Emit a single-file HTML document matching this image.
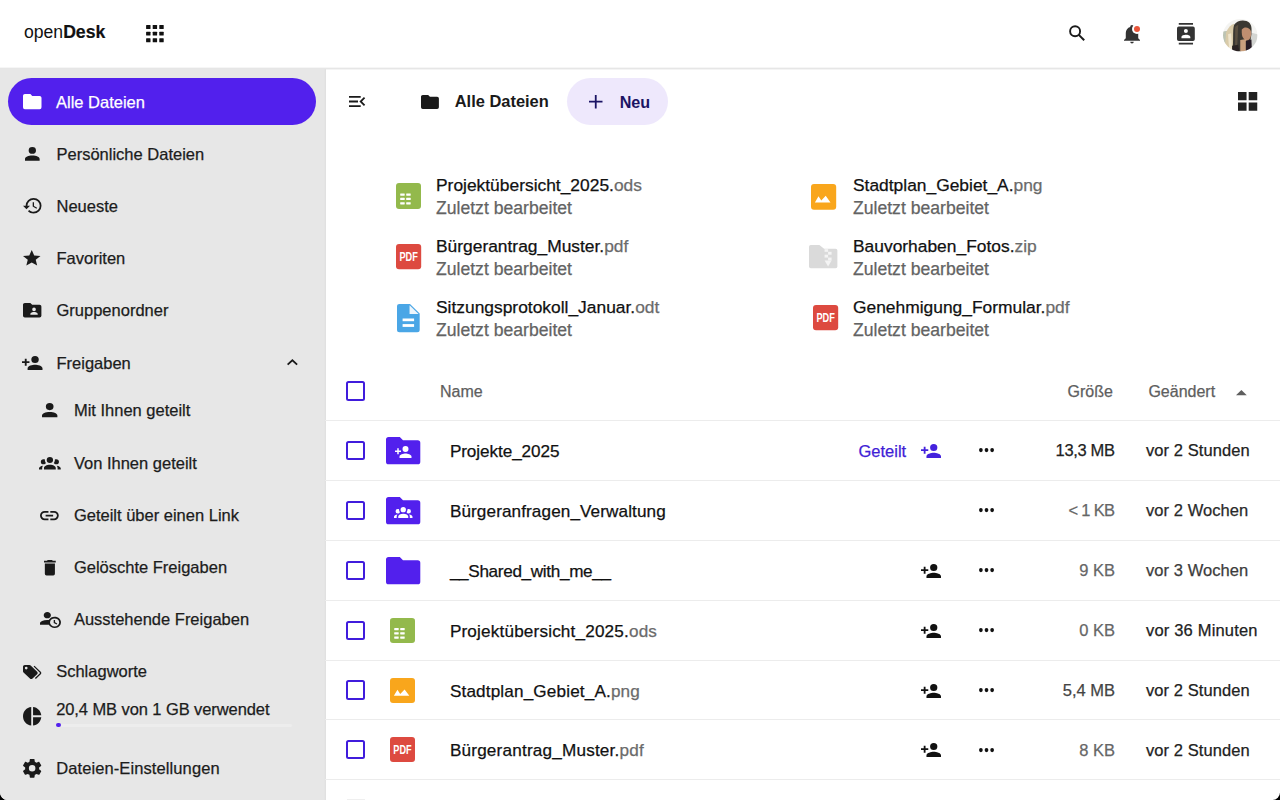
<!DOCTYPE html><html><head><meta charset="utf-8"><style>
html,body{margin:0;padding:0;}
body{width:1280px;height:800px;overflow:hidden;background:#000;font-family:"Liberation Sans",sans-serif;position:relative;}
#app{position:absolute;left:0;top:0;width:1280px;height:800px;background:#fff;border-radius:0 0 7.5px 7.5px;overflow:hidden;}
.t{position:absolute;white-space:nowrap;-webkit-text-stroke:0.25px currentColor;}
.i{position:absolute;display:block;overflow:visible;}
.box{position:absolute;}
.ext{color:#6b6b6b;}
</style></head><body><div id="app">
<div class="box" style="left:0;top:68px;width:1280px;height:1px;background:#e6e6e6;box-shadow:0 1px 0 #f4f4f4,0 -1px 0 #f6f6f6"></div>
<div class="t" style="left:24.00px;top:21.15px;font-size:17.6px;line-height:22px;color:#111;font-weight:400;-webkit-text-stroke:0;">open<b style="font-weight:700;-webkit-text-stroke:0.2px currentColor">Desk</b></div>
<svg class="i" style="left:146px;top:25px;width:18px;height:18px" viewBox="0 0 18 18"><rect x="0.10" y="0.10" width="4.4" height="3.95" rx="0.5" fill="#111"/><rect x="6.70" y="0.10" width="4.4" height="3.95" rx="0.5" fill="#111"/><rect x="13.30" y="0.10" width="4.4" height="3.95" rx="0.5" fill="#111"/><rect x="0.10" y="6.65" width="4.4" height="3.95" rx="0.5" fill="#111"/><rect x="6.70" y="6.65" width="4.4" height="3.95" rx="0.5" fill="#111"/><rect x="13.30" y="6.65" width="4.4" height="3.95" rx="0.5" fill="#111"/><rect x="0.10" y="13.20" width="4.4" height="3.95" rx="0.5" fill="#111"/><rect x="6.70" y="13.20" width="4.4" height="3.95" rx="0.5" fill="#111"/><rect x="13.30" y="13.20" width="4.4" height="3.95" rx="0.5" fill="#111"/></svg>
<svg class="i" style="left:1066px;top:22px;width:22px;height:22px" viewBox="0 0 22 22"><circle cx="9.1" cy="9.2" r="5" fill="none" stroke="#1a1a1a" stroke-width="1.9"/><path d="M12.8,12.9 L18.2,18.3" stroke="#1a1a1a" stroke-width="2" stroke-linecap="butt"/></svg>
<svg class="i" style="left:1123.70px;top:25.00px;width:16.00px;height:18.50px;" viewBox="3 2 18 21" preserveAspectRatio="none"><path fill="#333" d="M21,19V20H3V19L5,17V11C5,7.9 7.03,5.17 10,4.29C10,4.19 10,4.1 10,4A2,2 0 0,1 12,2A2,2 0 0,1 14,4C14,4.1 14,4.19 14,4.29C16.97,5.17 19,7.9 19,11V17L21,19M14,21A2,2 0 0,1 12,23A2,2 0 0,1 10,21"/></svg>
<div class="box" style="left:1131.5px;top:23.5px;width:10px;height:10px;border-radius:50%;background:#fff"></div>
<div class="box" style="left:1133.5px;top:25.5px;width:6px;height:6px;border-radius:50%;background:#e9553a"></div>
<svg class="i" style="left:1177.00px;top:22.90px;width:17.80px;height:21.50px;" viewBox="2 0 20 24" preserveAspectRatio="none"><path fill="#333" d="M20,0H4V2H20V0M4,24H20V22H4V24M20,4H4A2,2 0 0,0 2,6V18A2,2 0 0,0 4,20H20A2,2 0 0,0 22,18V6A2,2 0 0,0 20,4M12,6.75A2.25,2.25 0 0,1 14.25,9A2.25,2.25 0 0,1 12,11.25A2.25,2.25 0 0,1 9.75,9A2.250,2.25 0 0,1 12,6.75M17,17H7V15.5C7,13.83 10.33,13 12,13C13.67,13 17,13.83 17,15.5V17Z"/></svg>
<svg class="i" style="left:1223px;top:18.5px;width:34.5px;height:32.5px" viewBox="0 0 34 34" preserveAspectRatio="none"><defs><clipPath id="cav"><circle cx="17" cy="17" r="17"/></clipPath><filter id="avb" x="-10%" y="-10%" width="120%" height="120%"><feGaussianBlur stdDeviation="0.7"/></filter></defs><g clip-path="url(#cav)"><rect width="34" height="34" fill="#f4f4f2"/><g filter="url(#avb)"><path d="M0,13 L6,12 L6,30 L0,30Z" fill="#bcc4b4"/><path d="M27,14 L34,16 L34,34 L26,34Z" fill="#d3d5d2"/><path d="M3,14 C5,9 8,6 11,5 L12,31 L6,34 L2,28Z" fill="#d9cba9"/><path d="M5,16 L8,15 L9,32 L6,32Z" fill="#efe5cd"/><path d="M9,34 C11,24 9,12 11,6 C14,1 22,0 26,4 C29,8 28,12 28,16 L27,23 L19,23 C17,26 19,30 18,34Z" fill="#3b3730"/><path d="M12,8 L15,6 L14,30 L12,30Z" fill="#5a5040"/><path d="M18.5,11 C21,7.5 26,8.5 27.5,12.5 C28.5,17 27,21.5 24,22.5 C21,22.5 18.5,19.5 18.5,14.5Z" fill="#bf8e70"/><path d="M17,22 L23,21 L23.5,34 L17,34Z" fill="#c9a07e"/><path d="M22.5,23 L28,21.5 L28.5,34 L22.5,34Z" fill="#281d26"/><path d="M9,28 L15,27 L16,34 L9,34Z" fill="#2a2420"/></g></g></svg>
<div class="box" style="left:0;top:69px;width:326px;height:731px;background:#e7e7e7;box-shadow:inset -2px 0 2px -1px rgba(0,0,0,0.035)"></div>
<div class="box" style="left:8px;top:77.6px;width:308px;height:47.8px;border-radius:24px;background:#5220ed"></div>
<svg class="i" style="left:22.50px;top:93.75px;width:18.50px;height:15.25px;" viewBox="2 4 20 16" preserveAspectRatio="none"><path fill="#fff" d="M10,4H4C2.89,4 2,4.89 2,6V18A2,2 0 0,0 4,20H20A2,2 0 0,0 22,18V8C22,6.89 21.1,6 20,6H12L10,4Z"/></svg>
<div class="t" style="left:56.00px;top:91.53px;font-size:16.5px;line-height:21px;color:#fff;font-weight:400;">Alle Dateien</div>
<svg class="i" style="left:24.75px;top:146.90px;width:14.65px;height:13.70px;" viewBox="4 4 16 16" preserveAspectRatio="none"><path fill="#1a1a1a" d="M12,4A4,4 0 0,1 16,8A4,4 0 0,1 12,12A4,4 0 0,1 8,8A4,4 0 0,1 12,4M12,14C16.42,14 20,15.79 20,18V20H4V18C4,15.79 7.58,14 12,14Z"/></svg>
<div class="t" style="left:56.50px;top:143.53px;font-size:16.5px;line-height:21px;color:#1c1c1c;font-weight:400;">Persönliche Dateien</div>
<svg class="i" style="left:23.00px;top:198.00px;width:18.50px;height:15.50px;" viewBox="1 3 21 18" preserveAspectRatio="none"><path fill="#1a1a1a" d="M13.5,8H12V13L16.28,15.54L17,14.33L13.5,12.25V8M13,3A9,9 0 0,0 4,12H1L4.96,16.03L9,12H6A7,7 0 0,1 13,5A7,7 0 0,1 20,12A7,7 0 0,1 13,19C11.07,19 9.32,18.21 8.06,16.94L6.64,18.36C8.27,20 10.5,21 13,21A9,9 0 0,0 22,12A9,9 0 0,0 13,3"/></svg>
<div class="t" style="left:56.50px;top:195.58px;font-size:16.5px;line-height:21px;color:#1c1c1c;font-weight:400;">Neueste</div>
<svg class="i" style="left:23.00px;top:250.00px;width:17.50px;height:15.50px;" viewBox="2 2 20 19" preserveAspectRatio="none"><path fill="#1a1a1a" d="M12,17.27L18.18,21L16.54,13.97L22,9.24L14.81,8.62L12,2L9.19,8.62L2,9.24L7.45,13.97L5.82,21L12,17.27Z"/></svg>
<div class="t" style="left:56.50px;top:247.78px;font-size:16.5px;line-height:21px;color:#1c1c1c;font-weight:400;">Favoriten</div>
<svg class="i" style="left:23.10px;top:303.00px;width:18.40px;height:14.60px;" viewBox="2 4 20 16" preserveAspectRatio="none"><path fill="#1a1a1a" d="M10,4H4C2.89,4 2,4.89 2,6V18A2,2 0 0,0 4,20H20A2,2 0 0,0 22,18V8C22,6.89 21.1,6 20,6H12L10,4M14,9A2,2 0 0,1 16,11A2,2 0 0,1 14,13A2,2 0 0,1 12,11A2,2 0 0,1 14,9M18,17H10V16C10,14.67 12.67,14 14,14C15.33,14 18,14.67 18,16V17Z"/></svg>
<div class="t" style="left:56.50px;top:300.03px;font-size:16.5px;line-height:21px;color:#1c1c1c;font-weight:400;">Gruppenordner</div>
<svg class="i" style="left:21.90px;top:355.60px;width:20.50px;height:14.00px;" viewBox="1 4 22 16" preserveAspectRatio="none"><path fill="#1a1a1a" d="M15,14C12.33,14 7,15.33 7,18V20H23V18C23,15.33 17.67,14 15,14M6,10V7H4V10H1V12H4V15H6V12H9V10M15,12A4,4 0 0,0 19,8A4,4 0 0,0 15,4A4,4 0 0,0 11,8A4,4 0 0,0 15,12Z"/></svg>
<div class="t" style="left:56.50px;top:352.53px;font-size:16.5px;line-height:21px;color:#1c1c1c;font-weight:400;">Freigaben</div>
<svg class="i" style="left:41.50px;top:403.40px;width:15.40px;height:14.35px;" viewBox="4 4 16 16" preserveAspectRatio="none"><path fill="#1a1a1a" d="M12,4A4,4 0 0,1 16,8A4,4 0 0,1 12,12A4,4 0 0,1 8,8A4,4 0 0,1 12,4M12,14C16.42,14 20,15.79 20,18V20H4V18C4,15.79 7.58,14 12,14Z"/></svg>
<div class="t" style="left:73.90px;top:400.18px;font-size:16.5px;line-height:21px;color:#1c1c1c;font-weight:400;">Mit Ihnen geteilt</div>
<svg class="i" style="left:38.75px;top:457.00px;width:21.75px;height:12.50px;" viewBox="0 5.5 24 14.5" preserveAspectRatio="none"><path fill="#1a1a1a" d="M12,5.5A3.5,3.5 0 0,1 15.5,9A3.5,3.5 0 0,1 12,12.5A3.5,3.5 0 0,1 8.5,9A3.5,3.5 0 0,1 12,5.5M5,8C5.56,8 6.08,8.15 6.53,8.42C6.38,9.85 6.8,11.27 7.66,12.38C7.16,13.34 6.16,14 5,14A3,3 0 0,1 2,11A3,3 0 0,1 5,8M19,8A3,3 0 0,1 22,11A3,3 0 0,1 19,14C17.84,14 16.84,13.34 16.34,12.38C17.2,11.27 17.62,9.85 17.47,8.42C17.92,8.15 18.44,8 19,8M5.5,18.25C5.5,16.18 8.41,14.5 12,14.5C15.59,14.5 18.5,16.18 18.5,18.25V20H5.5V18.25M0,20V18.5C0,17.11 1.89,15.94 4.45,15.6C3.86,16.28 3.5,17.22 3.5,18.25V20H0M24,20H20.5V18.25C20.5,17.22 20.14,16.28 19.55,15.6C22.11,15.94 24,17.11 24,18.5V20Z"/></svg>
<div class="t" style="left:73.90px;top:452.53px;font-size:16.5px;line-height:21px;color:#1c1c1c;font-weight:400;">Von Ihnen geteilt</div>
<svg class="i" style="left:40.00px;top:510.75px;width:18.75px;height:9.25px;" viewBox="2 7 20 10" preserveAspectRatio="none"><path fill="#1a1a1a" d="M3.9,12C3.9,10.29 5.29,8.9 7,8.9H11V7H7A5,5 0 0,0 2,12A5,5 0 0,0 7,17H11V15.1H7C5.29,15.1 3.9,13.71 3.9,12M8,13H16V11H8V13M17,7H13V8.9H17C18.71,8.9 20.1,10.29 20.1,12C20.1,13.71 18.71,15.1 17,15.1H13V17H17A5,5 0 0,0 22,12A5,5 0 0,0 17,7Z"/></svg>
<div class="t" style="left:73.90px;top:505.03px;font-size:16.5px;line-height:21px;color:#1c1c1c;font-weight:400;">Geteilt über einen Link</div>
<svg class="i" style="left:43.75px;top:559.50px;width:11.75px;height:15.50px;" viewBox="5 3 14 18" preserveAspectRatio="none"><path fill="#1a1a1a" d="M19,4H15.5L14.5,3H9.5L8.5,4H5V6H19M6,19A2,2 0 0,0 8,21H16A2,2 0 0,0 18,19V7H6V19Z"/></svg>
<div class="t" style="left:73.90px;top:557.03px;font-size:16.5px;line-height:21px;color:#1c1c1c;font-weight:400;">Gelöschte Freigaben</div>
<svg class="i" style="left:39.50px;top:612.00px;width:21.00px;height:16.00px;" viewBox="1 4 23 20" preserveAspectRatio="none"><path fill="#1a1a1a" d="M10.63,14.1C12.23,10.58 16.38,9.03 19.9,10.63C23.42,12.23 24.97,16.38 23.37,19.9C22.24,22.4 19.75,24 17,24C14.3,24 11.83,22.44 10.67,20H1V18C1.06,16.86 1.84,15.93 3.34,15.18C4.84,14.43 6.72,14.04 9,14C9.57,14 10.11,14.05 10.63,14.1V14.1M9,4C10.12,4.03 11.06,4.42 11.81,5.17C12.56,5.92 12.93,6.86 12.93,8C12.93,9.14 12.56,10.08 11.81,10.83C11.06,11.58 10.12,11.95 9,11.95C7.88,11.95 6.94,11.58 6.19,10.83C5.44,10.08 5.07,9.14 5.07,8C5.07,6.86 5.44,5.92 6.19,5.17C6.94,4.42 7.88,4.03 9,4M17,22A5,5 0 0,0 22,17A5,5 0 0,0 17,12A5,5 0 0,0 12,17A5,5 0 0,0 17,22M16,14H17.5V16.82L19.94,18.23L19.19,19.53L16,17.69V14Z"/></svg>
<div class="t" style="left:73.90px;top:609.28px;font-size:16.5px;line-height:21px;color:#1c1c1c;font-weight:400;">Ausstehende Freigaben</div>
<svg class="i" style="left:22.90px;top:664.50px;width:18.30px;height:14.10px;" viewBox="2 4 20 16" preserveAspectRatio="none"><path fill="#1a1a1a" d="M5.5,9A1.5,1.5 0 0,0 7,7.5A1.5,1.5 0 0,0 5.5,6A1.5,1.5 0 0,0 4,7.5A1.5,1.5 0 0,0 5.5,9M17.41,11.58C17.77,11.94 18,12.44 18,13C18,13.55 17.78,14.05 17.41,14.41L12.41,19.41C12.05,19.77 11.55,20 11,20C10.45,20 9.95,19.78 9.58,19.41L2.59,12.42C2.22,12.05 2,11.55 2,11V6C2,4.89 2.89,4 4,4H9C9.55,4 10.05,4.22 10.41,4.58L17.41,11.58M13.54,5.71L14.54,4.71L21.41,11.58C21.78,11.94 22,12.45 22,13C22,13.55 21.78,14.05 21.42,14.41L16.04,19.79L15.04,18.79L20.75,13L13.54,5.71Z"/></svg>
<div class="t" style="left:56.20px;top:661.43px;font-size:16.5px;line-height:21px;color:#1c1c1c;font-weight:400;">Schlagworte</div>
<svg class="i" style="left:22.90px;top:707.00px;width:18.30px;height:18.50px;" viewBox="2 2 20 20" preserveAspectRatio="none"><path fill="#1a1a1a" d="M11,2V22C5.9,21.5 2,17.2 2,12C2,6.8 5.9,2.5 11,2M13,2V11H22C21.5,6.2 17.8,2.5 13,2M13,13V22C17.7,21.5 21.5,17.8 22,13H13Z"/></svg>
<div class="t" style="left:56.20px;top:699.38px;font-size:16.5px;line-height:21px;color:#1c1c1c;font-weight:400;letter-spacing:-0.090px;">20,4 MB von 1 GB verwendet</div>
<svg class="i" style="left:22.90px;top:759.00px;width:18.30px;height:18.70px;" viewBox="2.2 2 19.6 20" preserveAspectRatio="none"><path fill="#1a1a1a" d="M12,15.5A3.5,3.5 0 0,1 8.5,12A3.5,3.5 0 0,1 12,8.5A3.5,3.5 0 0,1 15.5,12A3.5,3.5 0 0,1 12,15.5M19.43,12.97C19.47,12.65 19.5,12.33 19.5,12C19.5,11.67 19.47,11.34 19.43,11L21.54,9.37C21.73,9.22 21.78,8.95 21.66,8.73L19.66,5.27C19.54,5.05 19.27,4.96 19.05,5.05L16.56,6.05C16.04,5.66 15.5,5.32 14.87,5.07L14.5,2.42C14.46,2.18 14.25,2 14,2H10C9.75,2 9.54,2.18 9.5,2.420L9.13,5.07C8.5,5.32 7.96,5.66 7.440,6.05L4.95,5.05C4.73,4.96 4.46,5.05 4.34,5.27L2.34,8.73C2.21,8.95 2.27,9.22 2.46,9.37L4.57,11C4.53,11.34 4.5,11.67 4.5,12C4.5,12.33 4.53,12.65 4.57,12.97L2.46,14.63C2.27,14.78 2.21,15.05 2.34,15.27L4.34,18.73C4.46,18.95 4.73,19.03 4.95,18.95L7.44,17.94C7.96,18.34 8.5,18.68 9.13,18.93L9.5,21.58C9.54,21.82 9.75,22 10,22H14C14.25,22 14.46,21.82 14.5,21.58L14.87,18.93C15.5,18.67 16.04,18.34 16.56,17.94L19.05,18.95C19.27,19.03 19.54,18.95 19.66,18.73L21.66,15.27C21.78,15.05 21.73,14.78 21.54,14.63L19.43,12.97Z"/></svg>
<div class="t" style="left:56.20px;top:757.98px;font-size:16.5px;line-height:21px;color:#1c1c1c;font-weight:400;letter-spacing:0.100px;">Dateien-Einstellungen</div>
<svg class="i" style="left:286.50px;top:359.00px;width:10.75px;height:6.25px;" viewBox="6 8 12 7.41" preserveAspectRatio="none"><path fill="#1a1a1a" d="M7.41,15.41L12,10.83L16.59,15.41L18,14L12,8L6,14L7.41,15.41Z"/></svg>
<div class="box" style="left:56px;top:723.5px;width:236px;height:3px;border-radius:2px;background:#ededed"></div>
<div class="box" style="left:56px;top:722.8px;width:4.6px;height:4.6px;border-radius:50%;background:#5220ed"></div>
<svg class="i" style="left:348.90px;top:96.00px;width:16.20px;height:11.00px;" viewBox="3 6 18 12" preserveAspectRatio="none"><path fill="#1a1a1a" d="M21,15.61L19.59,17L14.58,12L19.59,7L21,8.39L17.44,12L21,15.61M3,6H16V8H3V6M3,13V11H13V13H3M3,18V16H16V18H3Z"/></svg>
<svg class="i" style="left:421.00px;top:94.50px;width:17.90px;height:14.10px;" viewBox="2 4 20 16" preserveAspectRatio="none"><path fill="#1a1a1a" d="M10,4H4C2.89,4 2,4.89 2,6V18A2,2 0 0,0 4,20H20A2,2 0 0,0 22,18V8C22,6.89 21.1,6 20,6H12L10,4Z"/></svg>
<div class="t" style="left:454.70px;top:91.30px;font-size:16.44px;line-height:21px;color:#1a1a1a;font-weight:700;-webkit-text-stroke:0;">Alle Dateien</div>
<div class="box" style="left:566.6px;top:77.9px;width:101.8px;height:46.9px;border-radius:24px;background:#eee8fc"></div>
<svg class="i" style="left:588.75px;top:95px;width:13.5px;height:13.4px" viewBox="0 0 13.5 13.4"><path d="M6.75,0V13.4M0,6.7H13.5" stroke="#1b1464" stroke-width="1.8"/></svg>
<div class="t" style="left:619.70px;top:91.91px;font-size:16.14px;line-height:20px;color:#1b1464;font-weight:700;-webkit-text-stroke:0;">Neu</div>
<svg class="i" style="left:1238.25px;top:92.00px;width:19.25px;height:18.75px;" viewBox="3 3 18 18" preserveAspectRatio="none"><path fill="#222" d="M3,11H11V3H3M3,21H11V13H3M13,21H21V13H13M13,3V11H21V3"/></svg>
<svg class="i" style="left:396px;top:183px;width:25px;height:26px" viewBox="0 0 25 26" preserveAspectRatio="none"><rect width="25" height="26" rx="3" fill="#93b94c"/><rect x="4.2" y="10.4" width="4.5" height="2.3" rx="0.4" fill="#fff"/><rect x="10.2" y="10.4" width="4.5" height="2.3" rx="0.4" fill="#fff"/><rect x="4.2" y="14.8" width="4.5" height="2.3" rx="0.4" fill="#fff"/><rect x="10.2" y="14.8" width="4.5" height="2.3" rx="0.4" fill="#fff"/><rect x="4.2" y="19.2" width="4.5" height="2.3" rx="0.4" fill="#fff"/><rect x="10.2" y="19.2" width="4.5" height="2.3" rx="0.4" fill="#fff"/></svg>
<div class="t" style="left:436.00px;top:173.87px;font-size:17.4px;line-height:22px;color:#111;font-weight:400;">Projektübersicht_2025.<span class="ext">ods</span></div>
<div class="t" style="left:436.00px;top:196.60px;font-size:17.6px;line-height:22px;color:#636363;font-weight:400;">Zuletzt bearbeitet</div>
<svg class="i" style="left:395.75px;top:244.4px;width:25.2px;height:25.2px" viewBox="0 0 25.2 25.2" preserveAspectRatio="none"><rect width="25.2" height="25.2" rx="3" fill="#dd4a40"/><text x="12.6" y="17.4" text-anchor="middle" font-family="Liberation Sans" font-weight="700" font-size="12.4" fill="#fff" textLength="18.4" lengthAdjust="spacingAndGlyphs">PDF</text></svg>
<div class="t" style="left:436.00px;top:234.77px;font-size:17.4px;line-height:22px;color:#111;font-weight:400;">Bürgerantrag_Muster.<span class="ext">pdf</span></div>
<div class="t" style="left:436.00px;top:257.50px;font-size:17.6px;line-height:22px;color:#636363;font-weight:400;">Zuletzt bearbeitet</div>
<svg class="i" style="left:397.2px;top:304.4px;width:22.7px;height:28.3px" viewBox="0 0 22.7 28.3" preserveAspectRatio="none"><path d="M2.5,0 H13 L22.7,9.6 V25.8 A2.5,2.5 0 0 1 20.2,28.3 H2.5 A2.5,2.5 0 0 1 0,25.8 V2.5 A2.5,2.5 0 0 1 2.5,0Z" fill="#4aa6e6"/><path d="M12.6,1.2 L21.6,10 H12.6Z" fill="#eef6fc"/><rect x="5.6" y="14.5" width="11.5" height="2.7" fill="#fff"/><rect x="5.6" y="20.1" width="11.5" height="2.8" fill="#fff"/></svg>
<div class="t" style="left:436.00px;top:296.27px;font-size:17.4px;line-height:22px;color:#111;font-weight:400;">Sitzungsprotokoll_Januar.<span class="ext">odt</span></div>
<div class="t" style="left:436.00px;top:319.00px;font-size:17.6px;line-height:22px;color:#636363;font-weight:400;">Zuletzt bearbeitet</div>
<svg class="i" style="left:810.5px;top:184.2px;width:25.2px;height:25.8px" viewBox="0 0 25.2 25.8" preserveAspectRatio="none"><rect width="25.2" height="25.8" rx="3" fill="#f9a61c"/><path d="M3.9,18.4 L7.5,12.2 L10.3,16.6 L14.7,11.8 L19.5,18.4Z" fill="#fff"/></svg>
<div class="t" style="left:853.00px;top:173.87px;font-size:17.4px;line-height:22px;color:#111;font-weight:400;">Stadtplan_Gebiet_A.<span class="ext">png</span></div>
<div class="t" style="left:853.00px;top:196.60px;font-size:17.6px;line-height:22px;color:#636363;font-weight:400;">Zuletzt bearbeitet</div>
<svg class="i" style="left:809.2px;top:245.1px;width:28.4px;height:23.2px" viewBox="0 0 28.4 23.2" preserveAspectRatio="none"><path d="M1.8,0 H10.4 L15.1,3.8 H26.6 A1.8,1.8 0 0 1 28.4,5.6 V21.4 A1.8,1.8 0 0 1 26.6,23.2 H1.8 A1.8,1.8 0 0 1 0,21.4 V1.8 A1.8,1.8 0 0 1 1.8,0Z" fill="#dadada"/><rect x="15.6" y="4.2" width="3.5" height="2.6" fill="#f4f4f4"/><rect x="19.1" y="6.8" width="3.5" height="2.9" fill="#f4f4f4"/><rect x="15.6" y="9.7" width="3.5" height="2.9" fill="#f4f4f4"/><rect x="19.1" y="12.6" width="3.5" height="2.9" fill="#f4f4f4"/><path d="M15.6,15.5 H22.6 L19.1,21.5Z" fill="#f4f4f4"/></svg>
<div class="t" style="left:853.00px;top:234.77px;font-size:17.4px;line-height:22px;color:#111;font-weight:400;">Bauvorhaben_Fotos.<span class="ext">zip</span></div>
<div class="t" style="left:853.00px;top:257.50px;font-size:17.6px;line-height:22px;color:#636363;font-weight:400;">Zuletzt bearbeitet</div>
<svg class="i" style="left:813.3px;top:305.4px;width:25.2px;height:25.2px" viewBox="0 0 25.2 25.2" preserveAspectRatio="none"><rect width="25.2" height="25.2" rx="3" fill="#dd4a40"/><text x="12.6" y="17.4" text-anchor="middle" font-family="Liberation Sans" font-weight="700" font-size="12.4" fill="#fff" textLength="18.4" lengthAdjust="spacingAndGlyphs">PDF</text></svg>
<div class="t" style="left:853.00px;top:296.27px;font-size:17.4px;line-height:22px;color:#111;font-weight:400;">Genehmigung_Formular.<span class="ext">pdf</span></div>
<div class="t" style="left:853.00px;top:319.00px;font-size:17.6px;line-height:22px;color:#636363;font-weight:400;">Zuletzt bearbeitet</div>
<div class="box" style="left:345.9px;top:381.2px;width:15.6px;height:15.6px;border:2px solid #401cdc;border-radius:2.5px"></div>
<div class="box" style="left:347px;top:798.5px;width:18px;height:1.5px;background:#efefef"></div>
<div class="t" style="left:440.00px;top:381.56px;font-size:16px;line-height:20px;color:#5e5e5e;font-weight:400;">Name</div>
<div class="t" style="right:167.20px;top:381.56px;font-size:16px;line-height:20px;color:#5e5e5e;font-weight:400;">Größe</div>
<div class="t" style="left:1148.40px;top:381.56px;font-size:16px;line-height:20px;color:#5e5e5e;font-weight:400;">Geändert</div>
<svg class="i" style="left:1236.00px;top:389.70px;width:10.80px;height:5.30px;" viewBox="7 10 10 5" preserveAspectRatio="none"><path fill="#5e5e5e" d="M7,15L12,10L17,15H7Z"/></svg>
<div class="box" style="left:325px;top:420.00px;width:955px;height:1px;background:#ececec"></div>
<div class="box" style="left:325px;top:480.00px;width:955px;height:1px;background:#ececec"></div>
<div class="box" style="left:325px;top:540.00px;width:955px;height:1px;background:#ececec"></div>
<div class="box" style="left:325px;top:600.00px;width:955px;height:1px;background:#ececec"></div>
<div class="box" style="left:325px;top:659.70px;width:955px;height:1px;background:#ececec"></div>
<div class="box" style="left:325px;top:719.40px;width:955px;height:1px;background:#ececec"></div>
<div class="box" style="left:325px;top:778.80px;width:955px;height:1px;background:#ececec"></div>
<div class="box" style="left:345.9px;top:440.7px;width:15.6px;height:15.6px;border:2px solid #401cdc;border-radius:2.5px"></div>
<svg class="i" style="left:385.7px;top:436.9px;width:34.3px;height:27.3px" viewBox="0 0 34.3 27.3" preserveAspectRatio="none"><path d="M2.6,0 H13.8 L17,3.2 H31.7 A2.6,2.6 0 0 1 34.3,5.8 V24.7 A2.6,2.6 0 0 1 31.7,27.3 H2.6 A2.6,2.6 0 0 1 0,24.7 V2.6 A2.6,2.6 0 0 1 2.6,0Z" fill="#5220ed"/></svg>
<svg class="i" style="left:394.80px;top:445.70px;width:16.50px;height:12.00px;" viewBox="1 4 22 16" preserveAspectRatio="none"><path fill="#fff" d="M15,14C12.33,14 7,15.33 7,18V20H23V18C23,15.33 17.67,14 15,14M6,10V7H4V10H1V12H4V15H6V12H9V10M15,12A4,4 0 0,0 19,8A4,4 0 0,0 15,4A4,4 0 0,0 11,8A4,4 0 0,0 15,12Z"/></svg>
<div class="t" style="left:449.90px;top:441.21px;font-size:17.15px;line-height:21px;color:#111;font-weight:400;letter-spacing:-0.080px;">Projekte_2025</div>
<div class="t" style="left:858.50px;top:441.28px;font-size:16.5px;line-height:21px;color:#3f1ed6;font-weight:400;">Geteilt</div>
<svg class="i" style="left:921.00px;top:444.00px;width:20.00px;height:14.10px;" viewBox="1 4 22 16" preserveAspectRatio="none"><path fill="#4422dd" d="M15,14C12.33,14 7,15.33 7,18V20H23V18C23,15.33 17.67,14 15,14M6,10V7H4V10H1V12H4V15H6V12H9V10M15,12A4,4 0 0,0 19,8A4,4 0 0,0 15,4A4,4 0 0,0 11,8A4,4 0 0,0 15,12Z"/></svg>
<svg class="i" style="left:979.00px;top:448.40px;width:15.00px;height:4.20px;" viewBox="4 10 16 4" preserveAspectRatio="none"><path fill="#111" d="M16,12A2,2 0 0,1 18,10A2,2 0 0,1 20,12A2,2 0 0,1 18,14A2,2 0 0,1 16,12M10,12A2,2 0 0,1 12,10A2,2 0 0,1 14,12A2,2 0 0,1 12,14A2,2 0 0,1 10,12M4,12A2,2 0 0,1 6,10A2,2 0 0,1 8,12A2,2 0 0,1 6,14A2,2 0 0,1 4,12Z"/></svg>
<div class="t" style="right:165.33px;top:440.48px;font-size:16.5px;line-height:21px;color:#222;font-weight:400;letter-spacing:-0.330px;">13,3 MB</div>
<div class="t" style="left:1146.00px;top:440.48px;font-size:16.5px;line-height:21px;color:#222;font-weight:400;letter-spacing:0.080px;">vor 2 Stunden</div>
<div class="box" style="left:345.9px;top:500.7px;width:15.6px;height:15.6px;border:2px solid #401cdc;border-radius:2.5px"></div>
<svg class="i" style="left:385.7px;top:496.9px;width:34.3px;height:27.3px" viewBox="0 0 34.3 27.3" preserveAspectRatio="none"><path d="M2.6,0 H13.8 L17,3.2 H31.7 A2.6,2.6 0 0 1 34.3,5.8 V24.7 A2.6,2.6 0 0 1 31.7,27.3 H2.6 A2.6,2.6 0 0 1 0,24.7 V2.6 A2.6,2.6 0 0 1 2.6,0Z" fill="#5220ed"/></svg>
<svg class="i" style="left:393.75px;top:506.60px;width:18.50px;height:10.90px;" viewBox="0 5.5 24 14.5" preserveAspectRatio="none"><path fill="#fff" d="M12,5.5A3.5,3.5 0 0,1 15.5,9A3.5,3.5 0 0,1 12,12.5A3.5,3.5 0 0,1 8.5,9A3.5,3.5 0 0,1 12,5.5M5,8C5.56,8 6.08,8.15 6.53,8.42C6.38,9.85 6.8,11.27 7.66,12.38C7.16,13.34 6.16,14 5,14A3,3 0 0,1 2,11A3,3 0 0,1 5,8M19,8A3,3 0 0,1 22,11A3,3 0 0,1 19,14C17.84,14 16.84,13.34 16.34,12.38C17.2,11.27 17.62,9.85 17.47,8.42C17.92,8.15 18.44,8 19,8M5.5,18.25C5.5,16.18 8.41,14.5 12,14.5C15.59,14.5 18.5,16.18 18.5,18.25V20H5.5V18.25M0,20V18.5C0,17.11 1.89,15.94 4.45,15.6C3.86,16.28 3.5,17.22 3.5,18.25V20H0M24,20H20.5V18.25C20.5,17.22 20.14,16.28 19.55,15.6C22.11,15.94 24,17.11 24,18.5V20Z"/></svg>
<div class="t" style="left:449.90px;top:501.21px;font-size:17.15px;line-height:21px;color:#111;font-weight:400;letter-spacing:0.100px;">Bürgeranfragen_Verwaltung</div>
<svg class="i" style="left:979.00px;top:508.40px;width:15.00px;height:4.20px;" viewBox="4 10 16 4" preserveAspectRatio="none"><path fill="#111" d="M16,12A2,2 0 0,1 18,10A2,2 0 0,1 20,12A2,2 0 0,1 18,14A2,2 0 0,1 16,12M10,12A2,2 0 0,1 12,10A2,2 0 0,1 14,12A2,2 0 0,1 12,14A2,2 0 0,1 10,12M4,12A2,2 0 0,1 6,10A2,2 0 0,1 8,12A2,2 0 0,1 6,14A2,2 0 0,1 4,12Z"/></svg>
<div class="t" style="right:165.70px;top:500.48px;font-size:16.5px;line-height:21px;color:#666;font-weight:400;letter-spacing:-0.700px;">&lt; 1 KB</div>
<div class="t" style="left:1146.00px;top:500.48px;font-size:16.5px;line-height:21px;color:#2a2a2a;font-weight:400;letter-spacing:0.060px;">vor 2 Wochen</div>
<div class="box" style="left:345.9px;top:560.7px;width:15.6px;height:15.6px;border:2px solid #401cdc;border-radius:2.5px"></div>
<svg class="i" style="left:385.7px;top:556.9px;width:34.3px;height:27.3px" viewBox="0 0 34.3 27.3" preserveAspectRatio="none"><path d="M2.6,0 H13.8 L17,3.2 H31.7 A2.6,2.6 0 0 1 34.3,5.8 V24.7 A2.6,2.6 0 0 1 31.7,27.3 H2.6 A2.6,2.6 0 0 1 0,24.7 V2.6 A2.6,2.6 0 0 1 2.6,0Z" fill="#5220ed"/></svg>
<div class="t" style="left:449.90px;top:561.21px;font-size:17.15px;line-height:21px;color:#111;font-weight:400;letter-spacing:-0.330px;">__Shared_with_me__</div>
<svg class="i" style="left:921.00px;top:564.00px;width:20.00px;height:14.10px;" viewBox="1 4 22 16" preserveAspectRatio="none"><path fill="#111" d="M15,14C12.33,14 7,15.33 7,18V20H23V18C23,15.33 17.67,14 15,14M6,10V7H4V10H1V12H4V15H6V12H9V10M15,12A4,4 0 0,0 19,8A4,4 0 0,0 15,4A4,4 0 0,0 11,8A4,4 0 0,0 15,12Z"/></svg>
<svg class="i" style="left:979.00px;top:568.40px;width:15.00px;height:4.20px;" viewBox="4 10 16 4" preserveAspectRatio="none"><path fill="#111" d="M16,12A2,2 0 0,1 18,10A2,2 0 0,1 20,12A2,2 0 0,1 18,14A2,2 0 0,1 16,12M10,12A2,2 0 0,1 12,10A2,2 0 0,1 14,12A2,2 0 0,1 12,14A2,2 0 0,1 10,12M4,12A2,2 0 0,1 6,10A2,2 0 0,1 8,12A2,2 0 0,1 6,14A2,2 0 0,1 4,12Z"/></svg>
<div class="t" style="right:165.00px;top:560.48px;font-size:16.5px;line-height:21px;color:#666;font-weight:400;">9 KB</div>
<div class="t" style="left:1146.00px;top:560.48px;font-size:16.5px;line-height:21px;color:#3c3c3c;font-weight:400;letter-spacing:0.060px;">vor 3 Wochen</div>
<div class="box" style="left:345.9px;top:620.5500000000001px;width:15.6px;height:15.6px;border:2px solid #401cdc;border-radius:2.5px"></div>
<svg class="i" style="left:389.8px;top:617.85px;width:25px;height:25px" viewBox="0 0 25 26" preserveAspectRatio="none"><rect width="25" height="26" rx="3" fill="#93b94c"/><rect x="4.2" y="10.4" width="4.5" height="2.3" rx="0.4" fill="#fff"/><rect x="10.2" y="10.4" width="4.5" height="2.3" rx="0.4" fill="#fff"/><rect x="4.2" y="14.8" width="4.5" height="2.3" rx="0.4" fill="#fff"/><rect x="10.2" y="14.8" width="4.5" height="2.3" rx="0.4" fill="#fff"/><rect x="4.2" y="19.2" width="4.5" height="2.3" rx="0.4" fill="#fff"/><rect x="10.2" y="19.2" width="4.5" height="2.3" rx="0.4" fill="#fff"/></svg>
<div class="t" style="left:449.90px;top:621.06px;font-size:17.15px;line-height:21px;color:#111;font-weight:400;letter-spacing:0.170px;">Projektübersicht_2025.<span class="ext">ods</span></div>
<svg class="i" style="left:921.00px;top:623.85px;width:20.00px;height:14.10px;" viewBox="1 4 22 16" preserveAspectRatio="none"><path fill="#111" d="M15,14C12.33,14 7,15.33 7,18V20H23V18C23,15.33 17.67,14 15,14M6,10V7H4V10H1V12H4V15H6V12H9V10M15,12A4,4 0 0,0 19,8A4,4 0 0,0 15,4A4,4 0 0,0 11,8A4,4 0 0,0 15,12Z"/></svg>
<svg class="i" style="left:979.00px;top:628.25px;width:15.00px;height:4.20px;" viewBox="4 10 16 4" preserveAspectRatio="none"><path fill="#111" d="M16,12A2,2 0 0,1 18,10A2,2 0 0,1 20,12A2,2 0 0,1 18,14A2,2 0 0,1 16,12M10,12A2,2 0 0,1 12,10A2,2 0 0,1 14,12A2,2 0 0,1 12,14A2,2 0 0,1 10,12M4,12A2,2 0 0,1 6,10A2,2 0 0,1 8,12A2,2 0 0,1 6,14A2,2 0 0,1 4,12Z"/></svg>
<div class="t" style="right:165.00px;top:620.33px;font-size:16.5px;line-height:21px;color:#666;font-weight:400;">0 KB</div>
<div class="t" style="left:1146.00px;top:620.33px;font-size:16.5px;line-height:21px;color:#222;font-weight:400;letter-spacing:0.180px;">vor 36 Minuten</div>
<div class="box" style="left:345.9px;top:680.25px;width:15.6px;height:15.6px;border:2px solid #401cdc;border-radius:2.5px"></div>
<svg class="i" style="left:389.8px;top:677.55px;width:25px;height:25px" viewBox="0 0 25.2 25.8" preserveAspectRatio="none"><rect width="25.2" height="25.8" rx="3" fill="#f9a61c"/><path d="M3.9,18.4 L7.5,12.2 L10.3,16.6 L14.7,11.8 L19.5,18.4Z" fill="#fff"/></svg>
<div class="t" style="left:449.90px;top:680.76px;font-size:17.15px;line-height:21px;color:#111;font-weight:400;letter-spacing:0.150px;">Stadtplan_Gebiet_A.<span class="ext">png</span></div>
<svg class="i" style="left:921.00px;top:683.55px;width:20.00px;height:14.10px;" viewBox="1 4 22 16" preserveAspectRatio="none"><path fill="#111" d="M15,14C12.33,14 7,15.33 7,18V20H23V18C23,15.33 17.67,14 15,14M6,10V7H4V10H1V12H4V15H6V12H9V10M15,12A4,4 0 0,0 19,8A4,4 0 0,0 15,4A4,4 0 0,0 11,8A4,4 0 0,0 15,12Z"/></svg>
<svg class="i" style="left:979.00px;top:687.95px;width:15.00px;height:4.20px;" viewBox="4 10 16 4" preserveAspectRatio="none"><path fill="#111" d="M16,12A2,2 0 0,1 18,10A2,2 0 0,1 20,12A2,2 0 0,1 18,14A2,2 0 0,1 16,12M10,12A2,2 0 0,1 12,10A2,2 0 0,1 14,12A2,2 0 0,1 12,14A2,2 0 0,1 10,12M4,12A2,2 0 0,1 6,10A2,2 0 0,1 8,12A2,2 0 0,1 6,14A2,2 0 0,1 4,12Z"/></svg>
<div class="t" style="right:165.00px;top:680.03px;font-size:16.5px;line-height:21px;color:#444;font-weight:400;">5,4 MB</div>
<div class="t" style="left:1146.00px;top:680.03px;font-size:16.5px;line-height:21px;color:#222;font-weight:400;letter-spacing:0.080px;">vor 2 Stunden</div>
<div class="box" style="left:345.9px;top:739.8px;width:15.6px;height:15.6px;border:2px solid #401cdc;border-radius:2.5px"></div>
<svg class="i" style="left:389.8px;top:737.0999999999999px;width:25px;height:25px" viewBox="0 0 25.2 25.2" preserveAspectRatio="none"><rect width="25.2" height="25.2" rx="3" fill="#dd4a40"/><text x="12.6" y="17.4" text-anchor="middle" font-family="Liberation Sans" font-weight="700" font-size="12.4" fill="#fff" textLength="18.4" lengthAdjust="spacingAndGlyphs">PDF</text></svg>
<div class="t" style="left:449.90px;top:740.31px;font-size:17.15px;line-height:21px;color:#111;font-weight:400;letter-spacing:0.190px;">Bürgerantrag_Muster.<span class="ext">pdf</span></div>
<svg class="i" style="left:921.00px;top:743.10px;width:20.00px;height:14.10px;" viewBox="1 4 22 16" preserveAspectRatio="none"><path fill="#111" d="M15,14C12.33,14 7,15.33 7,18V20H23V18C23,15.33 17.67,14 15,14M6,10V7H4V10H1V12H4V15H6V12H9V10M15,12A4,4 0 0,0 19,8A4,4 0 0,0 15,4A4,4 0 0,0 11,8A4,4 0 0,0 15,12Z"/></svg>
<svg class="i" style="left:979.00px;top:747.50px;width:15.00px;height:4.20px;" viewBox="4 10 16 4" preserveAspectRatio="none"><path fill="#111" d="M16,12A2,2 0 0,1 18,10A2,2 0 0,1 20,12A2,2 0 0,1 18,14A2,2 0 0,1 16,12M10,12A2,2 0 0,1 12,10A2,2 0 0,1 14,12A2,2 0 0,1 12,14A2,2 0 0,1 10,12M4,12A2,2 0 0,1 6,10A2,2 0 0,1 8,12A2,2 0 0,1 6,14A2,2 0 0,1 4,12Z"/></svg>
<div class="t" style="right:165.00px;top:739.58px;font-size:16.5px;line-height:21px;color:#666;font-weight:400;">8 KB</div>
<div class="t" style="left:1146.00px;top:739.58px;font-size:16.5px;line-height:21px;color:#222;font-weight:400;letter-spacing:0.080px;">vor 2 Stunden</div>
</div></body></html>
